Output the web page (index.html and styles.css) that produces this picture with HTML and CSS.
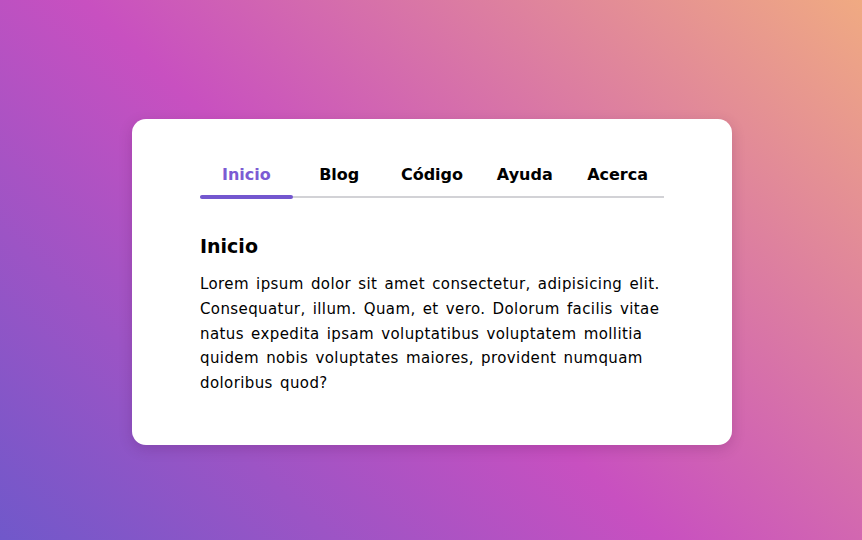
FILE: index.html
```html
<!DOCTYPE html>
<html lang="es">
<head>
<meta charset="utf-8">
<title>Tabs</title>
<link rel="stylesheet" href="styles.css">
</head>
<body>
<main class="page">
  <section class="card">
    <nav class="tabs">
      <a class="tab active">Inicio</a>
      <a class="tab">Blog</a>
      <a class="tab">Código</a>
      <a class="tab">Ayuda</a>
      <a class="tab">Acerca</a>
    </nav>
    <article class="panel">
      <h2 class="panel-title">Inicio</h2>
      <p class="panel-text">Lorem ipsum dolor sit amet consectetur, adipisicing elit. Consequatur, illum. Quam, et vero. Dolorum facilis vitae natus expedita ipsam voluptatibus voluptatem mollitia quidem nobis voluptates maiores, provident numquam doloribus quod?</p>
    </article>
  </section>
</main>
</body>
</html>
```

FILE: styles.css
```css
* { box-sizing: border-box; }
html, body { margin: 0; padding: 0; }
body {
  width: 862px;
  height: 540px;
  overflow: hidden;
  font-family: "DejaVu Sans", "Open Sans", sans-serif;
  color: #000;
  background: linear-gradient(43deg, #7058ca 0%, #c850c0 46%, #f0aa82 100%);
}
.page {
  height: 540px;
  display: flex;
  justify-content: center;
  align-items: flex-start;
  padding-top: 119px;
  padding-left: 2px;
}
.card {
  width: 600px;
  height: 326px;
  background: #fff;
  border-radius: 14px;
  box-shadow: 0 4px 14px rgba(60, 0, 60, 0.18);
  padding: 45px 68px 0;
}
.tabs {
  display: grid;
  grid-template-columns: repeat(5, 1fr);
  border-bottom: 2px solid #d2d2d6;
}
.tab {
  position: relative;
  text-align: center;
  font-size: 16px;
  font-weight: 700;
  line-height: 22px;
  padding-bottom: 10px;
  color: #000;
}
.tab.active { color: #7b5bd3; }
.tab.active::after {
  content: "";
  position: absolute;
  left: 0;
  right: 0;
  bottom: -3px;
  height: 4px;
  border-radius: 2px;
  background: #7357cf;
}
.panel { padding-top: 35px; }
.panel-title {
  margin: 0 0 13px;
  font-size: 19px;
  font-weight: 600;
  line-height: 26px;
}
.panel-text {
  margin: 0;
  font-size: 15px;
  line-height: 24.75px;
  letter-spacing: 0.4px;
  word-spacing: 2px;
}
```
